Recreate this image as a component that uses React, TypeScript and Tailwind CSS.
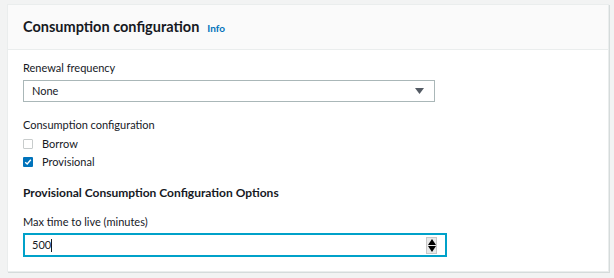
import React from 'react';

function Checkbox({ checked, label }: { checked: boolean; label: string }) {
  return (
    <label className="flex items-center gap-[9px] h-[18px]">
      {checked ? (
        <span className="flex items-center justify-center w-[10px] h-[10px] bg-[#0073bb] rounded-[1px]">
          <svg width="8" height="8" viewBox="0 0 8 8">
            <path d="M1.2 4.2 L3.2 6 L6.8 1.8" fill="none" stroke="white" strokeWidth="1.4" />
          </svg>
        </span>
      ) : (
        <span className="w-[10px] h-[10px] border border-[#c8cccc] bg-white rounded-[1px]" />
      )}
      <span className="text-[11px] leading-[18px] text-[#16191f]">{label}</span>
    </label>
  );
}

export default function App() {
  return (
    <div
      className="w-[614px] h-[278px] bg-[#f2f3f3] pl-[7px] pr-[5px] pt-[4px] pb-[6px]"
      style={{ fontFamily: 'Lato, "Noto Sans", sans-serif' }}
    >
      <div className="h-full bg-white border border-[#eaeded] shadow-[1px_1px_0_#d5dbdb] flex flex-col">
        <div className="h-[45px] shrink-0 bg-[#fafafa] border-b border-[#eaeded] flex items-center px-[15px]">
          <h2 className="text-[14.5px] font-bold text-[#16191f]">Consumption configuration</h2>
          <span className="ml-[8px] text-[10px] font-bold text-[#0073bb] mt-[2px]">Info</span>
        </div>
        <div className="px-[15px] pt-[10px] flex flex-col">
          <div className="text-[11px] text-[#16191f] h-[16px] leading-[16px]">Renewal frequency</div>
          <div className="mt-[4px] w-[412px] h-[22px] border border-[#aab7b8] flex items-center justify-between pl-[8px] pr-[10px]">
            <span className="text-[11px] text-[#16191f]">None</span>
            <svg width="9" height="6" viewBox="0 0 9 6">
              <path d="M0 0 H9 L4.5 6 Z" fill="#545b64" />
            </svg>
          </div>
          <div className="mt-[15px] text-[11px] text-[#16191f] h-[16px] leading-[16px]">Consumption configuration</div>
          <div className="mt-[2px] flex flex-col">
            <Checkbox checked={false} label="Borrow" />
            <Checkbox checked label="Provisional" />
          </div>
          <div className="mt-[14px] text-[12px] font-bold text-[#16191f] h-[16px] leading-[16px]">
            Provisional Consumption Configuration Options
          </div>
          <div className="mt-[13px] text-[11px] text-[#16191f] h-[16px] leading-[16px]">Max time to live (minutes)</div>
          <div className="mt-[3px] w-[424px] h-[24px] border border-[#00a1c9] shadow-[0_0_0_1px_#00a1c9_inset] flex items-center justify-between pl-[8px] pr-[9px]">
            <span className="text-[11px] text-[#16191f] flex items-center">
              500<span className="inline-block w-[1px] h-[13px] bg-[#16191f]" />
            </span>
            <div className="w-[11px] h-[17px] bg-[#e8e8e8] border border-[#c8c8c8] flex flex-col items-center justify-between py-[1px]">
              <svg width="8" height="6" viewBox="0 0 8 6">
                <path d="M0 6 L4 0 L8 6 Z" fill="#000" />
              </svg>
              <svg width="8" height="6" viewBox="0 0 8 6">
                <path d="M0 0 H8 L4 6 Z" fill="#000" />
              </svg>
            </div>
          </div>
        </div>
      </div>
    </div>
  );
}
